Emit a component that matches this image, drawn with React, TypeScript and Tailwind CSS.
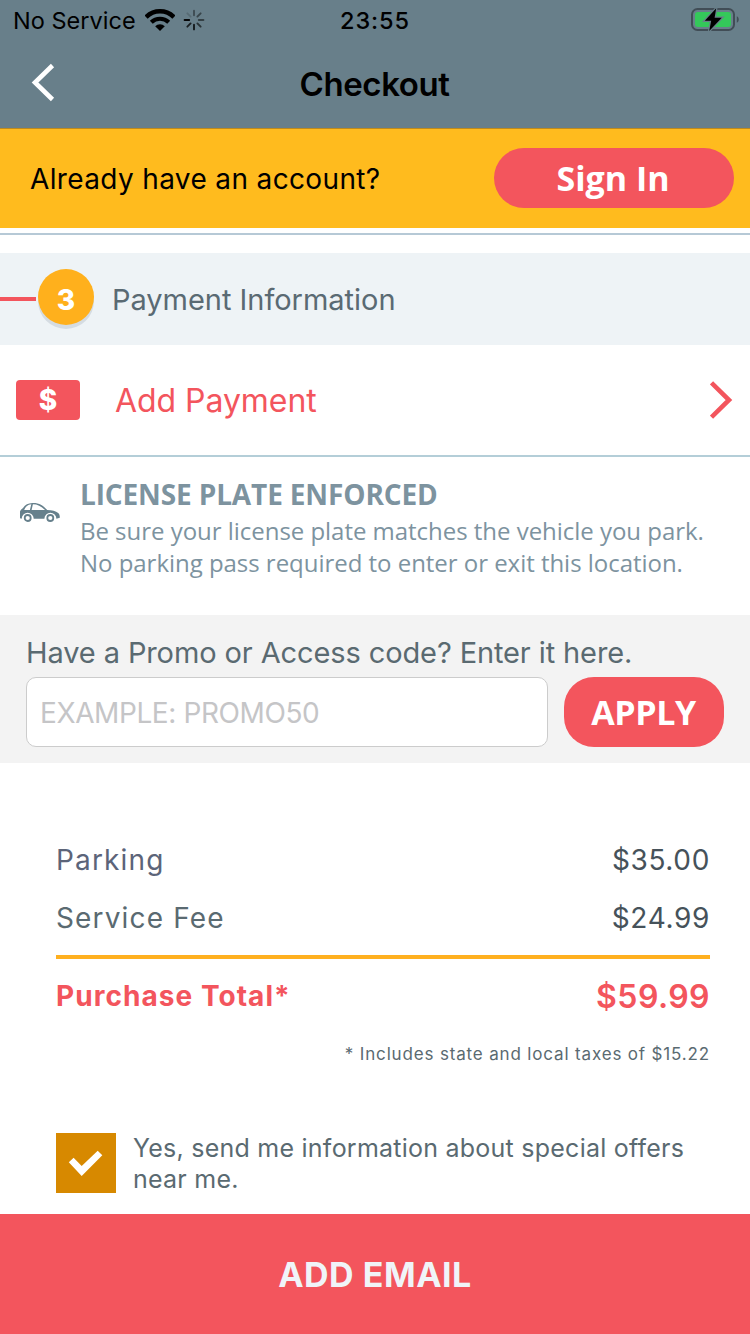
const spokes = [0.4, 0.45, 0.5, 0.6, 0.8, 0.75, 0.95, 0.15];

function WifiIcon() {
  return (
    <svg width="30" height="24" viewBox="0 0 30 24" fill="none" stroke="#000">
      <path d="M1.05 9.15A19.6 19.6 0 0 1 28.95 9.15" strokeWidth="4.5" />
      <path d="M6.3 14.3A12.3 12.3 0 0 1 23.7 14.3" strokeWidth="4.1" />
      <path d="M15 23L10.2 18.3A6.8 6.8 0 0 1 19.8 18.3Z" fill="#000" stroke="none" />
    </svg>
  );
}

function Spinner() {
  return (
    <svg width="22" height="22" viewBox="-11 -11 22 22">
      {spokes.map((opacity, i) => (
        <line
          key={i}
          x1="0"
          y1="-4.8"
          x2="0"
          y2="-9.4"
          stroke="#000"
          strokeWidth="1.9"
          strokeLinecap="round"
          opacity={opacity}
          transform={`rotate(${i * 45})`}
        />
      ))}
    </svg>
  );
}

function BatteryIcon() {
  return (
    <svg width="50" height="26" viewBox="0 0 50 26">
      <rect x="2" y="3" width="42" height="21" rx="5.5" fill="none" stroke="#414d56" strokeWidth="2" />
      <rect x="5" y="6" width="36" height="15" rx="3" fill="#34c85a" />
      <path d="M46.8 10.2C49.4 11.2 49.4 15.8 46.8 16.8Z" fill="#414d56" />
      <path
        d="M26.2 2.3L14.8 14.7H21.2L19.2 25L31.8 11.7H24.6Z"
        fill="#000"
        stroke="#687f8a"
        strokeWidth="2.4"
        paintOrder="stroke"
      />
    </svg>
  );
}

function CarIcon() {
  return (
    <svg width="40" height="20" viewBox="0 0 40 20">
      <path
        fill="#66808c"
        fillRule="evenodd"
        d="M0 16.200V9.600C.6 7.600 1.600 7.400 3.200 5.800C5.200 2.800 8 1.200 12.500 1C19 .8 23 3.400 27.200 8C32 8.300 35.800 8.900 38.200 10.900C39.400 12 39.900 13.600 39.800 15.800L36.400 16.800A6 6 0 0 0 24.400 16.800H13.700A6 6 0 0 0 1.700 16.800ZM4.200 7.900H9.900L11.300 2.200C7.800 2.400 5.400 4.600 4.200 7.900ZM11.600 7.900H25C21 4 17.500 2.200 12.900 2.200Z"
      />
      <circle cx="7.700" cy="16" r="3" fill="#fff" stroke="#66808c" strokeWidth="1.800" />
      <circle cx="30.300" cy="16" r="3" fill="#fff" stroke="#66808c" strokeWidth="1.800" />
    </svg>
  );
}

function StatusBar() {
  return (
    <div className="grid h-10 grid-cols-[1fr_auto_1fr] items-center text-[23.5px] leading-[41px] text-black">
      <div className="flex items-center pl-[13px]">
        <span className="tracking-[0.02px]">No Service</span>
        <span className="mb-[2px] ml-[9px]">
          <WifiIcon />
        </span>
        <span className="mb-[2px] ml-[8px]">
          <Spinner />
        </span>
      </div>
      <span className="font-medium tracking-[0.9px]">23:55</span>
      <div className="flex justify-end pr-[10px] pb-[3px]">
        <BatteryIcon />
      </div>
    </div>
  );
}

function FeeRow({ label, amount, color }: { label: string; amount: string; color: string }) {
  return (
    <div className="flex h-[58px] items-center justify-between text-[28px] leading-none">
      <span className={`tracking-[1.15px] ${color}`}>{label}</span>
      <span className="tracking-[0.65px] text-[#46525a]">{amount}</span>
    </div>
  );
}

export default function App() {
  return (
    <div className="flex h-[1334px] w-[750px] flex-col overflow-hidden bg-white font-['Inter',sans-serif] whitespace-nowrap">
      <header className="h-32 shrink-0 bg-[#687f8a]">
        <StatusBar />
        <div className="grid h-[88px] grid-cols-[1fr_auto_1fr] items-center">
          <button className="mb-[2px] ml-[30px] w-7">
            <svg width="28" height="40" viewBox="0 0 28 40" fill="none" stroke="#fff" strokeWidth="4.600">
              <path d="M22.500 2.500L5 19.500L22.500 36.500" />
            </svg>
          </button>
          <h1 className="pt-px pr-px text-[33px] leading-[87px] font-semibold tracking-[-0.4px] text-black">Checkout</h1>
        </div>
      </header>

      <div className="flex h-[100px] shrink-0 items-start justify-between border-t border-[#bd8a1d] bg-[#ffbb1e] pr-4 pl-[30px]">
        <span className="text-[28px] leading-[101px] tracking-[0.36px] text-black">Already have an account?</span>
        <button className="mt-[19px] h-[60px] w-60 rounded-full bg-[#f3555d] pr-[2px] text-center font-['Open_Sans',sans-serif] text-[34px] leading-[60px] font-bold text-white">
          Sign In
        </button>
      </div>

      <div className="mt-[5px] h-[2px] shrink-0 bg-[#b6c9d6]" />

      <div className="mt-[18px] flex h-[92px] shrink-0 items-center bg-[#eef3f6]">
        <div className="h-1 w-9 bg-[#f3555d]" />
        <div className="mb-[5px] ml-[2px] flex size-14 items-center justify-center rounded-full bg-[#ffb01c] pt-[7px] text-[28px] leading-none font-extrabold text-white shadow-[0_4px_0_#d5dce2]">
          3
        </div>
        <span className="ml-[18px] pt-[2px] text-[29px] tracking-[-0.03px] text-[#5a6a73]">Payment Information</span>
      </div>

      <div className="flex h-28 shrink-0 items-center border-b-2 border-[#b4ced8] pr-[16px] pl-4">
        <span className="h-10 w-16 rounded-[4px] bg-[#f3555d] text-center text-[28px] leading-[41px] font-extrabold text-white">
          $
        </span>
        <span className="ml-[35px] pt-[2px] text-[32px] tracking-[-0.05px] text-[#f3555d]">Add Payment</span>
        <svg className="ml-auto" width="24" height="40" viewBox="0 0 24 40" fill="none" stroke="#f3555d" strokeWidth="4.600">
          <path d="M1.500 2.800L19 20L1.500 37.200" />
        </svg>
      </div>

      <div className="flex h-[158px] shrink-0 items-start font-['Open_Sans',sans-serif] text-[#7d939f]">
        <div className="mt-[45px] ml-5 w-[60px]">
          <CarIcon />
        </div>
        <div className="pt-[17px]">
          <h2 className="mb-px text-[28px] leading-[40px] font-bold tracking-[-0.13px]">LICENSE PLATE ENFORCED</h2>
          <p className="text-[24px] leading-8 tracking-[-0.03px]">
            Be sure your license plate matches the vehicle you park.
            <br />
            No parking pass required to enter or exit this location.
          </p>
        </div>
      </div>

      <div className="h-[148px] shrink-0 bg-[#f3f3f3] px-[26px]">
        <label className="block h-[62px] pt-[17px] text-[29px] leading-[42px] tracking-[-0.11px] text-[#5a6a71]">
          Have a Promo or Access code? Enter it here.
        </label>
        <div className="flex gap-4">
          <div className="h-[70px] w-[522px] rounded-[10px] border border-[#cccccc] bg-white pt-px pl-[13px] text-[28px] leading-[69px] tracking-[-0.4px] text-[#c5c5c7]">
            EXAMPLE: PROMO50
          </div>
          <button className="h-[70px] w-40 rounded-[30px] bg-[#f3555d] pt-px pr-px text-center font-['Open_Sans',sans-serif] text-[34px] leading-[69px] font-bold tracking-[-0.4px] text-white">
            APPLY
          </button>
        </div>
      </div>

      <div className="shrink-0 pt-[68px] pr-10 pl-[56px]">
        <div className="w-[654px]">
          <FeeRow label="Parking" amount="$35.00" color="text-[#5c6479]" />
          <FeeRow label="Service Fee" amount="$24.99" color="text-[#5a6a71]" />
          <div className="mt-[8px] h-1 bg-[#ffb01f]" />
          <div className="flex h-[75px] items-center justify-between leading-none text-[#f3555d]">
            <span className="pb-[2px] text-[28px] font-bold tracking-[1.05px]">Purchase Total*</span>
            <span className="pt-px text-[32px] font-semibold tracking-[0.43px]">$59.99</span>
          </div>
          <div className="h-[40px] text-right text-[17px] leading-[40px] tracking-[0.84px] text-[#5a6a71]">
            * Includes state and local taxes of $15.22
          </div>
        </div>
      </div>

      <div className="mt-[59px] flex h-[60px] shrink-0 items-start pl-[56px]">
        <svg className="bg-[#d78900]" width="60" height="60" viewBox="0 0 60 60">
          <path fill="#fff" d="M12.800 29.200L17.600 24.700L25.700 33L41.700 17.800L46.300 22.200L25.700 43Z" />
        </svg>
        <p className="ml-[17px] text-[25px] leading-[31px] tracking-[0.24px] text-[#5a6a71]">
          Yes, send me information about special offers
          <br />
          near me.
        </p>
      </div>

      <button className="mt-auto h-[120px] shrink-0 bg-[#f3555d] pt-px text-center text-[34px] leading-[120px] font-bold tracking-[0.52px] text-[#f0f4f8]">
        ADD EMAIL
      </button>
    </div>
  );
}
